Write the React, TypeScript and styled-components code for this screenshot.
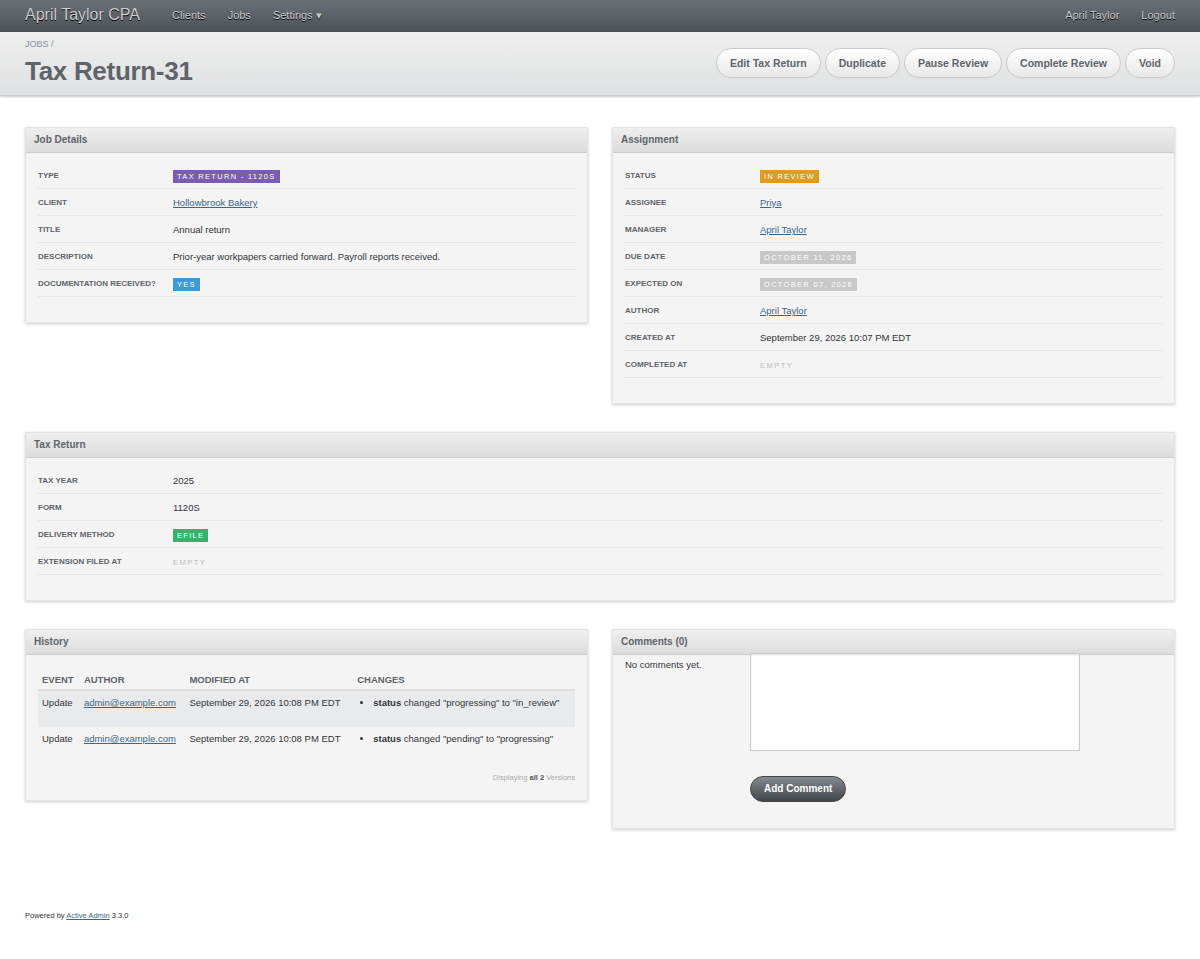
import React from "react";
import styled, { createGlobalStyle } from "styled-components";

const Global = createGlobalStyle`
  html, body { margin: 0; padding: 0; background: #fff; }
  body { font-family: "Liberation Sans", Arial, sans-serif; font-size: 12px; color: #323537; line-height: 1.4; }
  a { color: #38678b; }
`;

const Header = styled.div`
  height: 31px; display: flex; align-items: center; padding: 0 25px;
  background: linear-gradient(#6a7176, #4d5256); border-bottom: 1px solid #444;
`;
const Brand = styled.div`color: #cdcdcd; font-size: 16px; margin-right: 32px; text-shadow: 0 1px 0 #000;`;
const NavItem = styled.span`color: #ccc; font-size: 11px; margin-right: 22px; text-shadow: 0 1px 0 #000;`;
const Spacer = styled.div`flex: 1;`;

const TitleBar = styled.div`
  height: 63px; display: flex; align-items: center; justify-content: space-between;
  padding: 0 25px; background: linear-gradient(#efefef, #dfe1e2);
  border-bottom: 1px solid #cdcdcd; box-shadow: 0 1px 2px #ccc;
`;
const Crumb = styled.div`font-size: 9px; color: #8a949e; margin-bottom: 3px;`;
const H1 = styled.h1`margin: 0; font-size: 26px; font-weight: bold; color: #5e6469; letter-spacing: -0.3px;`;
const Actions = styled.div`display: flex; gap: 4px; margin-top: -2px;`;
const ActionBtn = styled.span`
  border: 1px solid #cbcbcb; border-radius: 200px; padding: 7px 13px; font-size: 10.5px; font-weight: bold;
  color: #5e6469; background: linear-gradient(#fff, #e8e8e8); box-shadow: 0 1px 1px #ddd; line-height: 14px;
`;

const Main = styled.div`padding: 31px 25px 0;`;
const Grid = styled.div`display: grid; grid-template-columns: 1fr 1fr; gap: 24px; align-items: start; margin-bottom: 28px;`;
const Panel = styled.div`background: #f4f4f4; box-shadow: 0 1px 3px #ccc; border: 1px solid #e4e4e4;`;
const PanelHead = styled.div`
  height: 24px; line-height: 24px; padding: 0 8px; font-size: 10px; font-weight: bold; color: #5e6469;
  background: linear-gradient(#efefef, #dcdcdc); border-bottom: 1px solid #cdcdcd;
`;
const PanelBody = styled.div<{ pb?: number }>`padding: 9px 12px ${p => p.pb ?? 25}px;`;
const Row = styled.div`
  display: grid; grid-template-columns: 135px 1fr; min-height: 26px; border-bottom: 1px solid #e6e6e6;
  align-items: start; padding-top: 8px; box-sizing: border-box;
`;
const Label = styled.div`font-size: 8px; font-weight: bold; color: #5e6469; text-transform: uppercase; line-height: 12px; padding-bottom: 6px;`;
const Val = styled.div`font-size: 9.5px; line-height: 12px;`;
const Tag = styled.span<{ bg: string }>`
  display: inline-block; background: ${p => p.bg}; color: #fff; font-size: 7.5px; letter-spacing: 1.3px;
  padding: 1px 4px; text-transform: uppercase; line-height: 11px;
`;
const Empty = styled.span`font-size: 7.5px; letter-spacing: 1.5px; color: #bbb;`;

const Table = styled.table`width: 100%; border-collapse: collapse; font-size: 9.5px;`;
const Th = styled.th`text-align: left; font-size: 9.5px; font-weight: bold; color: #5e6469; padding: 9px 4px 3px; border-bottom: 2px solid #ddd;`;
const Td = styled.td`vertical-align: top; padding: 5px 4px 17px; line-height: 14px;`;
const Tr = styled.tr<{ alt?: boolean }>`background: ${p => (p.alt ? "#e9eaeb" : "transparent")};`;
const Ul = styled.ul`margin: 0; padding-left: 16px;`;
const Info = styled.div`text-align: right; font-size: 7.5px; color: #aaa; margin-top: 10px;`;

const CommentBody = styled.div`display: grid; grid-template-columns: 125px 330px; padding: 4px 12px 26px;`;
const TextArea = styled.div`grid-column: 2; height: 96px; border: 1px solid #ccc; background: #fff; margin-top: -6px; box-shadow: inset 0 1px 2px #ddd;`;
const Submit = styled.span`
  grid-column: 2; justify-self: start; margin-top: 25px; background: linear-gradient(#838a90, #414549);
  color: #fff; font-size: 10px; font-weight: bold; padding: 5px 13px; border-radius: 200px; border: 1px solid #454545;
`;
const Footer = styled.div`padding: 54px 25px 30px; font-size: 7.5px;`;

type R = [string, React.ReactNode];
const Rows = ({ rows }: { rows: R[] }) => (
  <>{rows.map(([l, v]) => (<Row key={l}><Label>{l}</Label><Val>{v}</Val></Row>))}</>
);

export default function App() {
  return (
    <>
      <Global />
      <Header>
        <Brand>April Taylor CPA</Brand>
        <NavItem>Clients</NavItem><NavItem>Jobs</NavItem><NavItem>Settings ▾</NavItem>
        <Spacer /><NavItem>April Taylor</NavItem><NavItem style={{ marginRight: 0 }}>Logout</NavItem>
      </Header>
      <TitleBar>
        <div><Crumb>JOBS /</Crumb><H1>Tax Return-31</H1></div>
        <Actions>
          {["Edit Tax Return", "Duplicate", "Pause Review", "Complete Review", "Void"].map(b => <ActionBtn key={b}>{b}</ActionBtn>)}
        </Actions>
      </TitleBar>
      <Main>
        <Grid>
          <Panel>
            <PanelHead>Job Details</PanelHead>
            <PanelBody>
              <Rows rows={[
                ["Type", <Tag bg="#7a5cb0">Tax Return - 1120S</Tag>],
                ["Client", <a href="#">Hollowbrook Bakery</a>],
                ["Title", "Annual return"],
                ["Description", "Prior-year workpapers carried forward. Payroll reports received."],
                ["Documentation received?", <Tag bg="#3d9ad9">Yes</Tag>],
              ]} />
            </PanelBody>
          </Panel>
          <Panel>
            <PanelHead>Assignment</PanelHead>
            <PanelBody>
              <Rows rows={[
                ["Status", <Tag bg="#e09b1b">In Review</Tag>],
                ["Assignee", <a href="#">Priya</a>],
                ["Manager", <a href="#">April Taylor</a>],
                ["Due Date", <Tag bg="#c8c8c8">October 11, 2026</Tag>],
                ["Expected On", <Tag bg="#c8c8c8">October 07, 2026</Tag>],
                ["Author", <a href="#">April Taylor</a>],
                ["Created At", "September 29, 2026 10:07 PM EDT"],
                ["Completed At", <Empty>EMPTY</Empty>],
              ]} />
            </PanelBody>
          </Panel>
        </Grid>
        <Panel style={{ marginBottom: 28 }}>
          <PanelHead>Tax Return</PanelHead>
          <PanelBody>
            <Rows rows={[
              ["Tax Year", "2025"],
              ["Form", "1120S"],
              ["Delivery Method", <Tag bg="#3bb06d">efile</Tag>],
              ["Extension Filed At", <Empty>EMPTY</Empty>],
            ]} />
          </PanelBody>
        </Panel>
        <Grid>
          <Panel>
            <PanelHead>History</PanelHead>
            <PanelBody pb={16}>
              <Table>
                <thead><tr><Th>EVENT</Th><Th>AUTHOR</Th><Th>MODIFIED AT</Th><Th>CHANGES</Th></tr></thead>
                <tbody>
                  <Tr alt><Td>Update</Td><Td><a href="#">admin@example.com</a></Td><Td>September 29, 2026 10:08 PM EDT</Td>
                    <Td><Ul><li><b>status</b> changed "progressing" to "in_review"</li></Ul></Td></Tr>
                  <Tr><Td>Update</Td><Td><a href="#">admin@example.com</a></Td><Td>September 29, 2026 10:08 PM EDT</Td>
                    <Td><Ul><li><b>status</b> changed "pending" to "progressing"</li></Ul></Td></Tr>
                </tbody>
              </Table>
              <Info>Displaying <b style={{ color: "#555" }}>all 2</b> Versions</Info>
            </PanelBody>
          </Panel>
          <Panel>
            <PanelHead>Comments (0)</PanelHead>
            <CommentBody>
              <Val>No comments yet.</Val>
              <TextArea />
              <Submit>Add Comment</Submit>
            </CommentBody>
          </Panel>
        </Grid>
      </Main>
      <Footer>Powered by <a href="#">Active Admin</a> 3.3.0</Footer>
    </>
  );
}
